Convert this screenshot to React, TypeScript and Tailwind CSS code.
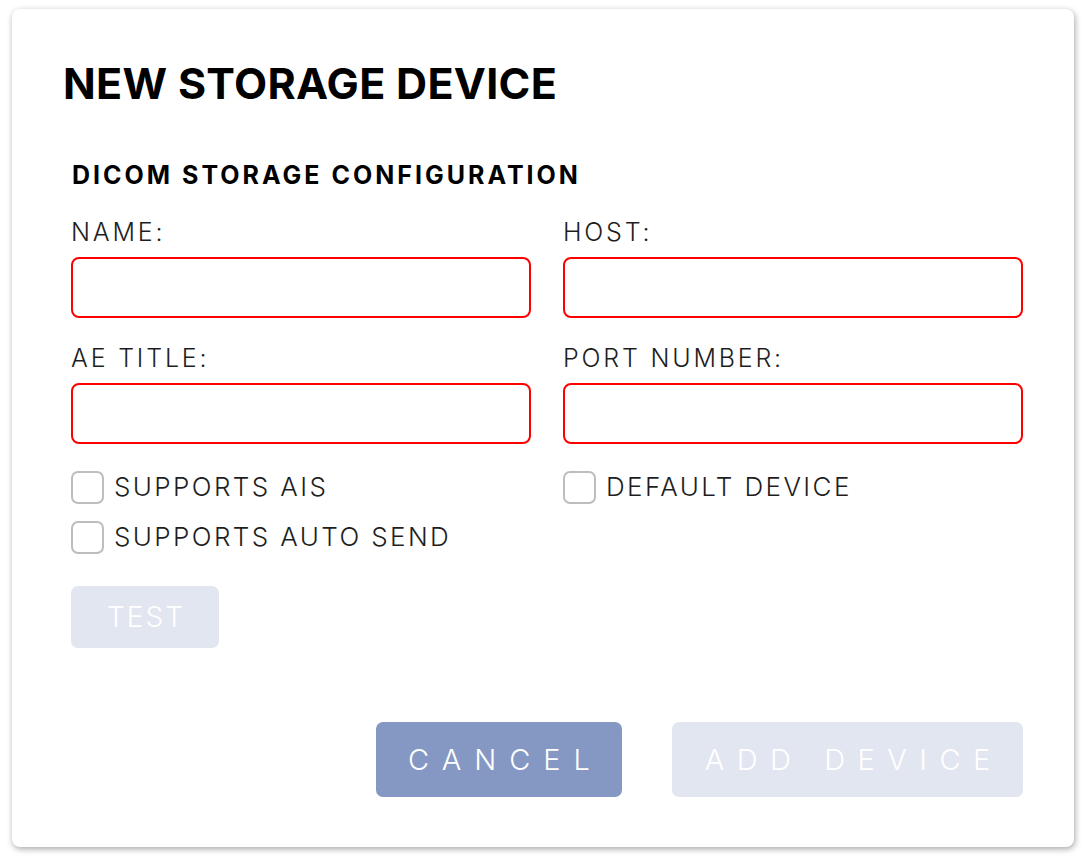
import React from "react";

const font = { fontFamily: "Inter, 'Open Sans', 'Liberation Sans', sans-serif" };

function Field({ label }: { label: string }) {
  return (
    <div className="flex flex-col">
      <div className="text-[25px] leading-[25px] font-light text-[#1e1e1e] tracking-[2.8px]">{label}</div>
      <div className="mt-[12px] h-[61px] rounded-[8px] border-2 border-[#ff0000] bg-white" />
    </div>
  );
}

function Check({ label }: { label: string }) {
  return (
    <div className="flex items-center h-[32px]">
      <div className="w-[33px] h-[33px] rounded-[7px] border-2 border-[#bdbdbd] bg-white shrink-0" />
      <div className="ml-[10px] text-[26px] leading-[26px] font-light text-[#1e1e1e] tracking-[2.4px]">{label}</div>
    </div>
  );
}

export default function App() {
  return (
    <div className="min-h-[862px] w-[1086px] bg-white pt-[9px] pl-[12px]" style={font}>
      <div className="w-[1062px] rounded-[8px] bg-white shadow-[1px_2px_6px_rgba(0,0,0,0.35)] pt-[53px] pb-[50px]">
        <h1 className="ml-[51px] text-[43px] leading-[43px] font-bold text-black tracking-[0.3px]">
          NEW STORAGE DEVICE
        </h1>
        <div className="ml-[59px] mr-[51px] mt-[58px]">
          <h2 className="text-[25px] leading-[25px] font-bold text-black tracking-[3px] ml-[1px]">
            DICOM STORAGE CONFIGURATION
          </h2>
          <div className="mt-[32px] grid grid-cols-2 gap-x-[32px] gap-y-[28px]">
            <Field label="NAME:" />
            <Field label="HOST:" />
            <Field label="AE TITLE:" />
            <Field label="PORT NUMBER:" />
          </div>
          <div className="mt-[27px] grid grid-cols-2 gap-x-[32px]">
            <div className="flex flex-col gap-[18px]">
              <Check label="SUPPORTS AIS" />
              <Check label="SUPPORTS AUTO SEND" />
            </div>
            <div className="flex flex-col">
              <Check label="DEFAULT DEVICE" />
            </div>
          </div>
          <button className="mt-[33px] w-[148px] h-[62px] rounded-[7px] bg-[#e1e6f0] text-white text-[28px] font-light tracking-[2px] pl-[2px] flex items-center justify-center">
            TEST
          </button>
          <div className="mt-[74px] flex justify-end gap-[50px]">
            <button className="w-[246px] h-[75px] rounded-[7px] bg-[#8598c3] text-white text-[29px] font-light tracking-[13px] pl-[13px] flex items-center justify-center">
              CANCEL
            </button>
            <button className="w-[351px] h-[75px] rounded-[7px] bg-[#e1e6f0] text-white text-[29px] font-light tracking-[12.5px] pl-[12.5px] flex items-center justify-center">
              ADD DEVICE
            </button>
          </div>
        </div>
      </div>
    </div>
  );
}
